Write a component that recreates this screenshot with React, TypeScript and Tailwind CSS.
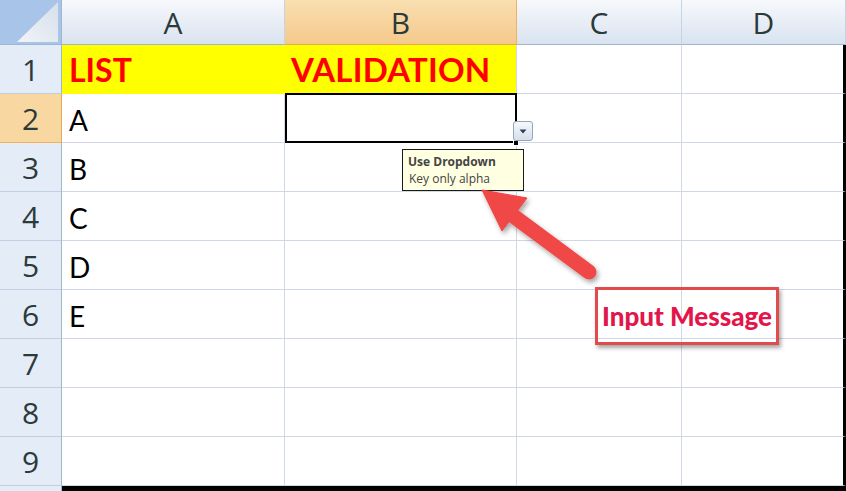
import React from "react";

const hdrFont = { fontFamily: '"Open Sans", "Noto Sans", sans-serif' };
const cellFont = { fontFamily: 'Lato, "Open Sans", sans-serif' };

function ColHead({ label, active }: { label: string; active?: boolean }) {
  return (
    <div
      className={
        active
          ? "flex items-center justify-center border-r border-b border-r-[#f0b25e] border-b-[#e9a94e] bg-gradient-to-b from-[#f9dfb0] to-[#f5c98b] text-[30px] text-[#2b3a3a]"
          : "flex items-center justify-center border-r border-b border-r-[#c5d3e6] border-b-[#9eb6ce] bg-gradient-to-b from-[#f7f9fc] to-[#d9e3f0] text-[30px] text-[#2b3a3a]"
      }
      style={hdrFont}
    >
      {label}
    </div>
  );
}

function RowHead({ label, active }: { label: string; active?: boolean }) {
  return (
    <div
      className={
        active
          ? "flex items-center justify-center border-r border-b border-r-[#e9a94e] border-b-[#f0b25e] bg-[#f8d8a0] text-[30px] text-[#2b3a3a]"
          : "flex items-center justify-center border-r border-b border-r-[#9eb6ce] border-b-[#c0cfe2] bg-[#e4ecf7] text-[30px] text-[#2b3a3a]"
      }
      style={hdrFont}
    >
      {label}
    </div>
  );
}

function Cell({ text, last }: { text?: string; last?: boolean }) {
  return (
    <div
      className={
        last
          ? "flex items-end border-b border-b-[#d0d7e5] border-r-[3px] border-r-black bg-white pl-[7px] pb-[8px] text-[28px] leading-none text-black"
          : "flex items-end border-r border-b border-[#d0d7e5] bg-white pl-[7px] pb-[8px] text-[28px] leading-none text-black"
      }
      style={cellFont}
    >
      {text}
    </div>
  );
}

export default function App() {
  const rows = [2, 3, 4, 5, 6, 7, 8, 9];
  const aVals: Record<number, string> = { 2: "A", 3: "B", 4: "C", 5: "D", 6: "E" };
  return (
    <div className="relative h-[491px] w-[846px] overflow-hidden bg-white">
      <div className="grid h-[491px] w-[846px] grid-cols-[62px_223px_232px_165px_164px] grid-rows-[45px_repeat(9,49px)_5px]">
        {/* corner */}
        <div className="relative border-r border-b border-[#9eb6ce] bg-[#a9c4e9]">
          <svg className="absolute inset-0" width="62" height="45" viewBox="0 0 62 45">
            <defs>
              <linearGradient id="tri" x1="0" y1="1" x2="1" y2="0">
                <stop offset="0" stopColor="#f1f4f8" />
                <stop offset="1" stopColor="#d6dfeb" />
              </linearGradient>
            </defs>
            <polygon points="58,2 58,42 17,42" fill="url(#tri)" />
          </svg>
        </div>
        <ColHead label="A" />
        <ColHead label="B" active />
        <ColHead label="C" />
        <ColHead label="D" />

        {/* row 1 */}
        <RowHead label="1" />
        <div
          className="flex items-end bg-[#ffff00] pl-[7px] pb-[8px] text-[32px] font-bold leading-none text-[#ff0000]"
          style={cellFont}
        >
          LIST
        </div>
        <div
          className="flex items-end border-r border-[#d0d7e5] bg-[#ffff00] pl-[6px] pb-[8px] text-[33px] font-bold leading-none tracking-[0.2px] text-[#ff0000]"
          style={cellFont}
        >
          VALIDATION
        </div>
        <Cell />
        <Cell last />

        {rows.map((r) => (
          <React.Fragment key={r}>
            <RowHead label={String(r)} active={r === 2} />
            <Cell text={aVals[r]} />
            {r === 2 ? (
              <div className="relative border-r border-b border-[#d0d7e5] bg-white">
                <div className="absolute -top-[1px] left-0 -right-[1px] -bottom-[1px] border-2 border-black" />
                <div className="absolute -right-[3px] -bottom-[4px] h-[6px] w-[6px] border border-white bg-black" />
              </div>
            ) : (
              <Cell />
            )}
            <Cell />
            <Cell last />
          </React.Fragment>
        ))}

        {/* bottom edge */}
        <div className="border-r border-[#9eb6ce] bg-[#e4ecf7]" />
        <div className="col-span-4 bg-black" />
      </div>

      {/* dropdown button */}
      <div className="absolute left-[513px] top-[121px] flex h-[20px] w-[20px] items-center justify-center rounded-[3px] border border-[#94a5bf] bg-gradient-to-b from-[#f6f8fb] to-[#d7dfea]">
        <svg width="8" height="5" viewBox="0 0 8 5">
          <polygon points="0.5,0.5 7.5,0.5 4,4.5" fill="#2e3f5e" />
        </svg>
      </div>

      {/* tooltip */}
      <div
        className="absolute left-[402px] top-[149px] flex h-[42px] w-[122px] flex-col border border-[#1a1a1a] bg-[#ffffe1] pl-[5px] pt-[3px] text-[12px] leading-[17px] text-[#444]"
        style={hdrFont}
      >
        <span className="font-bold">Use Dropdown</span>
        <span className="pl-[1px]">Key only alpha</span>
      </div>

      {/* arrow */}
      <svg className="pointer-events-none absolute inset-0" width="846" height="491" viewBox="0 0 846 491">
        <defs>
          <filter id="sh" x="-20%" y="-20%" width="140%" height="140%">
            <feDropShadow dx="2" dy="3" stdDeviation="2.5" floodColor="#000" floodOpacity="0.35" />
          </filter>
        </defs>
        <g filter="url(#sh)" fill="#f04646" stroke="#f04646">
          <line x1="589" y1="272" x2="508" y2="212" strokeWidth="15" strokeLinecap="round" />
          <polygon points="482,190 527,198 502,231" strokeWidth="1" strokeLinejoin="round" />
        </g>
      </svg>

      {/* Input Message label */}
      <div
        className="absolute left-[595px] top-[287px] flex h-[58px] w-[184px] items-center justify-center border-[3px] border-[#e24b4b] text-[26px] font-black text-[#e2164a] shadow-[2px_3px_4px_rgba(0,0,0,0.35)]"
        style={cellFont}
      >
        Input Message
      </div>
    </div>
  );
}
